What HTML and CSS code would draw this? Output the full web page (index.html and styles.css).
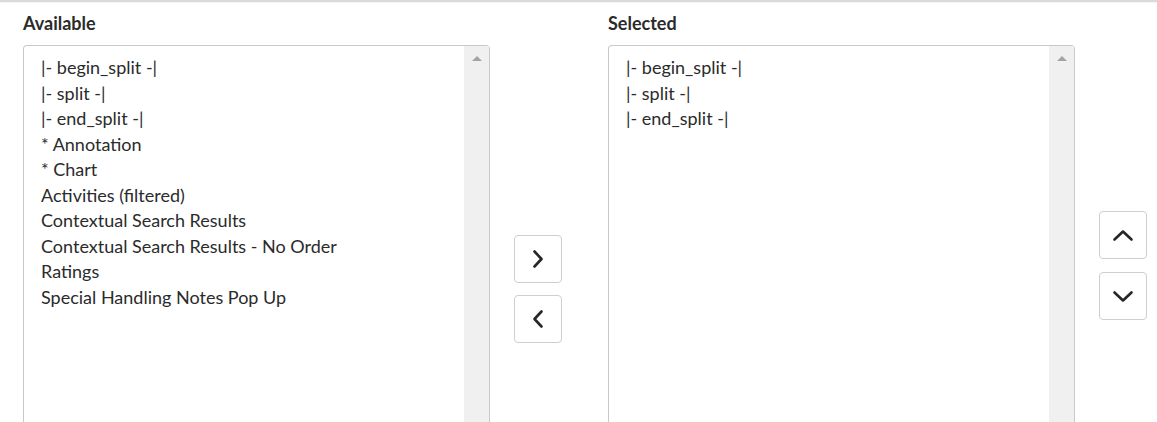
FILE: index.html
```html
<!DOCTYPE html>
<html>
<head>
<meta charset="utf-8">
<link rel="stylesheet" href="styles.css">
</head>
<body>
<div class="topline"></div>
<div class="slush">
  <div class="col">
    <div class="label">Available</div>
    <div class="listbox">
      <div class="items">
        <div>|- begin_split -|</div>
        <div>|- split -|</div>
        <div>|- end_split -|</div>
        <div>* Annotation</div>
        <div>* Chart</div>
        <div>Activities (filtered)</div>
        <div>Contextual Search Results</div>
        <div>Contextual Search Results - No Order</div>
        <div>Ratings</div>
        <div>Special Handling Notes Pop Up</div>
      </div>
      <div class="scrollbar"><span class="arrow"></span></div>
    </div>
  </div>
  <div class="btns mid">
    <button class="btn" aria-label="Add"><svg width="12" height="20" viewBox="0 0 12 20"><path d="M2.5 2.5 L9.5 10 L2.5 17.5" fill="none" stroke="#262626" stroke-width="2.6" stroke-linecap="round" stroke-linejoin="round"/></svg></button>
    <button class="btn" aria-label="Remove"><svg width="12" height="20" viewBox="0 0 12 20"><path d="M9.5 2.5 L2.5 10 L9.5 17.5" fill="none" stroke="#262626" stroke-width="2.6" stroke-linecap="round" stroke-linejoin="round"/></svg></button>
  </div>
  <div class="col">
    <div class="label">Selected</div>
    <div class="listbox">
      <div class="items">
        <div>|- begin_split -|</div>
        <div>|- split -|</div>
        <div>|- end_split -|</div>
      </div>
      <div class="scrollbar"><span class="arrow"></span></div>
    </div>
  </div>
  <div class="btns right">
    <button class="btn" aria-label="Move up"><svg width="22" height="13" viewBox="0 0 22 13"><path d="M2.5 10.5 L11 2.5 L19.5 10.5" fill="none" stroke="#262626" stroke-width="2.6" stroke-linecap="round" stroke-linejoin="round"/></svg></button>
    <button class="btn" aria-label="Move down"><svg width="22" height="13" viewBox="0 0 22 13"><path d="M2.5 2.5 L11 10.5 L19.5 2.5" fill="none" stroke="#262626" stroke-width="2.6" stroke-linecap="round" stroke-linejoin="round"/></svg></button>
  </div>
</div>
</body>
</html>
```
FILE: styles.css
```css
html, body {
  margin: 0;
  padding: 0;
  background: #ffffff;
  overflow: hidden;
}
body {
  font-family: "Source Sans Pro", "Lato", "Liberation Sans", sans-serif;
  color: #2b2b2b;
  height: 422px;
}
.topline {
  height: 2px;
  background: #d9d9d9;
  box-shadow: 0 1px 2px rgba(0,0,0,0.06);
}
.slush {
  display: flex;
  align-items: flex-start;
  padding-left: 23px;
}
.col {
  width: 467px;
  display: flex;
  flex-direction: column;
}
.label {
  font-size: 18px;
  font-weight: 700;
  line-height: 22px;
  height: 22px;
  margin-top: 10px;
  margin-bottom: 11px;
  color: #2b2b2b;
}
.listbox {
  height: 377px;
  border: 1px solid #c9c9c9;
  border-bottom: 0;
  border-radius: 4px 4px 0 0;
  display: flex;
  box-sizing: border-box;
}
.items {
  flex: 1;
  padding: 9px 0 0 17px;
  font-size: 18px;
  line-height: 25.5px;
  color: #2b2b2b;
}
.scrollbar {
  width: 25px;
  background: #f0f0f0;
  display: flex;
  justify-content: center;
  padding-top: 10px;
  box-sizing: border-box;
}
.arrow {
  width: 0;
  height: 0;
  border-left: 5px solid transparent;
  border-right: 5px solid transparent;
  border-bottom: 5px solid #a3a3a3;
}
.btns {
  width: 48px;
  display: flex;
  flex-direction: column;
}
.btns.mid {
  margin: 233px 46px 0 24px;
  gap: 12px;
}
.btns.right {
  margin: 209px 0 0 24px;
  gap: 13px;
}
.btn {
  width: 48px;
  height: 48px;
  padding: 0;
  border: 1px solid #cfcfcf;
  border-radius: 4px;
  background: #ffffff;
  display: flex;
  align-items: center;
  justify-content: center;
  cursor: pointer;
}
```
